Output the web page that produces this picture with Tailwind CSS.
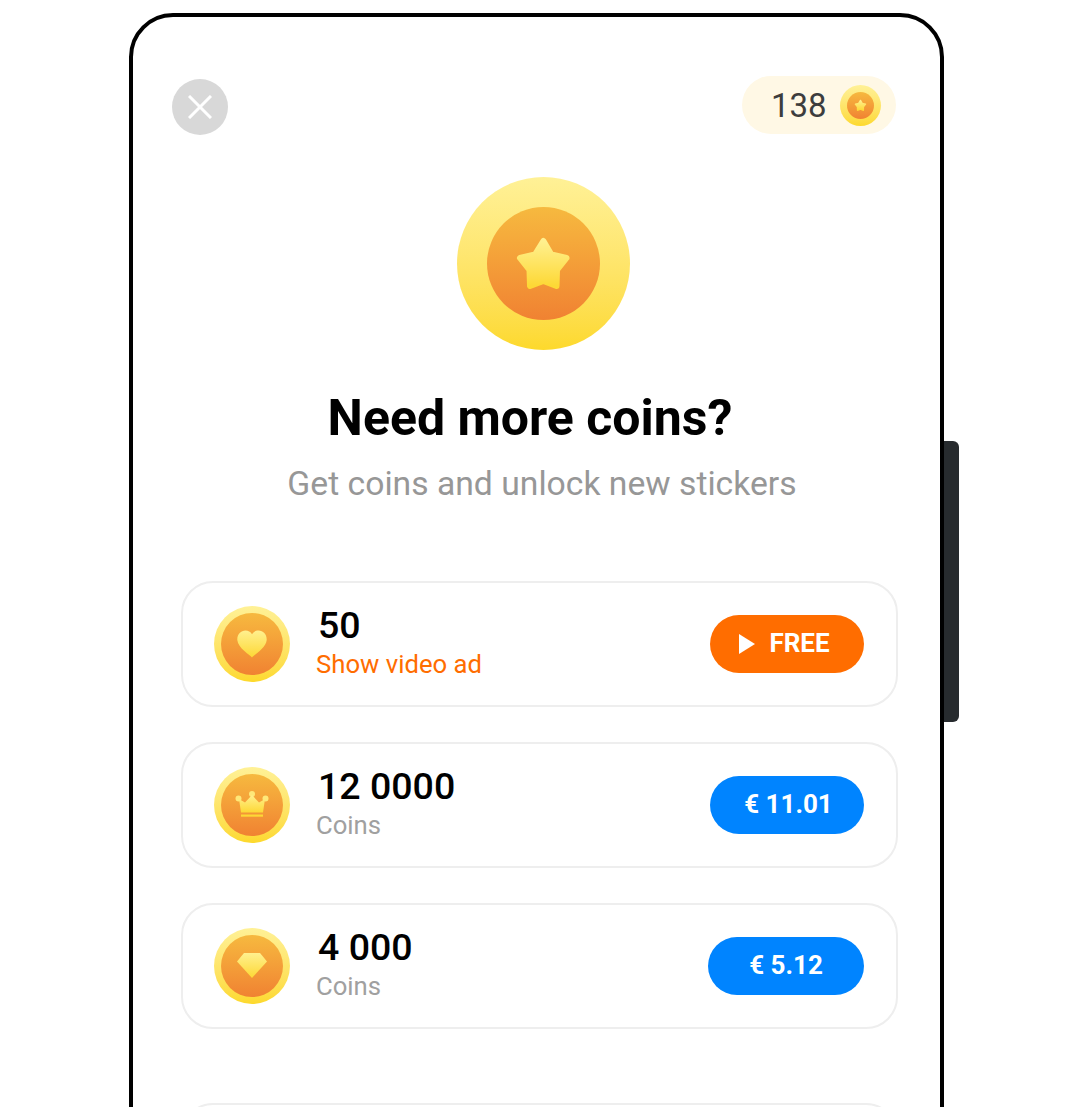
<!DOCTYPE html>
<html lang="en">
<head>
    <meta charset="UTF-8">
    <meta name="viewport" content="width=device-width, initial-scale=1.0">
    <title>Need more coins?</title>
    <script src="https://cdn.jsdelivr.net/npm/@tailwindcss/browser@4"></script>
</head>
<body class="bg-white font-['Roboto',sans-serif]">
    <svg width="0" height="0" class="absolute">
        <defs>
            <linearGradient id="iconFill" x1="0" y1="0" x2="0" y2="1">
                <stop offset="0" stop-color="#fff08f"/>
                <stop offset="1" stop-color="#fdd835"/>
            </linearGradient>
        </defs>
    </svg>

    <div class="flex items-start w-[1080px] h-[1107px] overflow-hidden pl-[129px] pt-[13px]">
        <!-- phone frame -->
        <div class="w-[815px] h-[1300px] shrink-0 border-4 border-black rounded-[44px] bg-white">
            <div class="flex items-center justify-between pl-[39px] pr-[44px] pt-[58px]">
                <div class="w-[56px] h-[56px] mt-[4px] rounded-full bg-[#d8d8d8] flex items-center justify-center">
                    <svg width="24" height="24" viewBox="0 0 24 24" fill="none" stroke="white" stroke-width="3"><path d="M1 1L23 23M23 1L1 23"/></svg>
                </div>
                <div class="w-[154px] h-[58px] rounded-full bg-[#fff8e5] flex items-center pl-[29px] gap-[13px]">
                    <span class="text-[33px] text-[#3d3d3d] leading-none">138</span>
                    <div class="w-[41px] h-[41px] rounded-full bg-gradient-to-b from-[#fff196] to-[#fdd92b] flex items-center justify-center">
                        <div class="w-[27px] h-[27px] rounded-full bg-gradient-to-b from-[#f6b93f] to-[#f08232] flex items-center justify-center">
                            <svg width="13" height="13" viewBox="-3 -3 59 58"><path fill="url(#iconFill)" stroke="url(#iconFill)" stroke-width="6" stroke-linejoin="round" d="M26.4 3L34.3 16.5L49.5 20L40 32L39.5 48L26.4 43L13 48L12.5 32L3 20L18 16.5Z"/></svg>
                        </div>
                    </div>
                </div>
            </div>

            <div class="flex justify-center mt-[42px] pl-[13px]">
                <div class="w-[173px] h-[173px] rounded-full bg-gradient-to-b from-[#fff196] to-[#fdd92b] flex items-center justify-center">
                    <div class="w-[113px] h-[113px] rounded-full bg-gradient-to-b from-[#f6b93f] to-[#f08232] flex items-center justify-center">
                        <svg width="55" height="54" viewBox="-1 -1 55 54"><path fill="url(#iconFill)" stroke="url(#iconFill)" stroke-width="6" stroke-linejoin="round" d="M26.4 3L34.3 16.5L49.5 20L40 32L39.5 48L26.4 43L13 48L12.5 32L3 20L18 16.5Z"/></svg>
                    </div>
                </div>
            </div>

            <h1 class="text-center text-[50px] font-bold text-black leading-none mt-[43px] pr-[13px]">Need more coins?</h1>
            <p class="text-center text-[33.7px] text-[#979797] leading-none mt-[24px] pl-[11px]">Get coins and unlock new stickers</p>

            <div class="flex flex-col gap-[35px] pl-[48px] pr-[42px] mt-[80px]">
                <!-- free coins -->
                <div class="h-[126px] rounded-[32px] border-2 border-[#eeeeee] flex items-center pl-[31px] pr-[32px]">
                    <div class="w-[76px] h-[76px] rounded-full bg-gradient-to-b from-[#fff196] to-[#fdd92b] flex items-center justify-center shrink-0">
                        <div class="w-[62px] h-[62px] rounded-full bg-gradient-to-b from-[#f6b93f] to-[#f08232] flex items-center justify-center">
                            <svg width="30" height="28" viewBox="0 0 30 28"><path fill="url(#iconFill)" d="M15 27.5C13 25 1 18 .3 10 0 4.500 3.800.5 8.500.5c2.800 0 5 1.300 6.500 3.700C16.500 1.800 18.700.5 21.500.5 26.200.5 30 4.500 29.700 10 29 18 17 25 15 27.500Z"/></svg>
                        </div>
                    </div>
                    <div class="ml-[26px] mb-[3px] flex flex-col flex-1">
                        <span class="text-[37.5px] font-medium text-black leading-none ml-[2px]">50</span>
                        <span class="text-[25.7px] text-[#ff6d00] leading-none mt-[8px]">Show video ad</span>
                    </div>
                    <div class="w-[154px] h-[58px] rounded-full bg-[#ff6d00] flex items-center justify-center gap-[14px] pr-[5px] text-white text-[26px] font-bold">
                        <svg width="16" height="20" viewBox="0 0 16 20" fill="white"><path d="M0 0L16 10L0 20Z"/></svg>
                        <span>FREE</span>
                    </div>
                </div>

                <div class="h-[126px] rounded-[32px] border-2 border-[#eeeeee] flex items-center pl-[31px] pr-[32px]">
                    <div class="w-[76px] h-[76px] rounded-full bg-gradient-to-b from-[#fff196] to-[#fdd92b] flex items-center justify-center shrink-0">
                        <div class="w-[62px] h-[62px] rounded-full bg-gradient-to-b from-[#f6b93f] to-[#f08232] flex items-center justify-center">
                            <svg width="34" height="27" viewBox="0 0 34 27" fill="#fee879"><circle cx="3.500" cy="7.500" r="3"/><circle cx="17" cy="3" r="3"/><circle cx="30.500" cy="7.500" r="3"/><path d="M6 21.500L4 8L10 11.500L17 4L24 11.500L30 8L28 21.500Z" fill="url(#iconFill)"/><rect x="6" y="23.500" width="22" height="2.200" fill="#fdd835"/></svg>
                        </div>
                    </div>
                    <div class="ml-[26px] mb-[3px] flex flex-col flex-1">
                        <span class="text-[37.5px] font-medium text-black leading-none ml-[2px]">12 0000</span>
                        <span class="text-[25.7px] text-[#a0a0a0] leading-none mt-[8px]">Coins</span>
                    </div>
                    <div class="w-[154px] h-[58px] pl-[3px] rounded-full bg-[#0084ff] flex items-center justify-center text-white text-[26px] font-bold">€ 11.01</div>
                </div>

                <div class="h-[126px] rounded-[32px] border-2 border-[#eeeeee] flex items-center pl-[31px] pr-[32px]">
                    <div class="w-[76px] h-[76px] rounded-full bg-gradient-to-b from-[#fff196] to-[#fdd92b] flex items-center justify-center shrink-0">
                        <div class="w-[62px] h-[62px] rounded-full bg-gradient-to-b from-[#f6b93f] to-[#f08232] flex items-center justify-center">
                            <svg width="30" height="25" viewBox="0 0 30 25"><path fill="url(#iconFill)" d="M7 0H23L30 8.500L15 25L0 8.500Z"/></svg>
                        </div>
                    </div>
                    <div class="ml-[26px] mb-[3px] flex flex-col flex-1">
                        <span class="text-[37.5px] font-medium text-black leading-none ml-[2px]">4 000</span>
                        <span class="text-[25.7px] text-[#a0a0a0] leading-none mt-[8px]">Coins</span>
                    </div>
                    <div class="w-[156px] h-[58px] rounded-full bg-[#0084ff] flex items-center justify-center text-white text-[26px] font-bold">€ 5.12</div>
                </div>

                <div class="h-[126px] rounded-[32px] border-2 border-[#eeeeee] mt-[39px]"></div>
            </div>
        </div>
        <!-- side button -->
        <div class="w-[15px] h-[281px] mt-[428px] shrink-0 bg-[#272b2e] rounded-r-[6px]"></div>
    </div>
</body>
</html>
